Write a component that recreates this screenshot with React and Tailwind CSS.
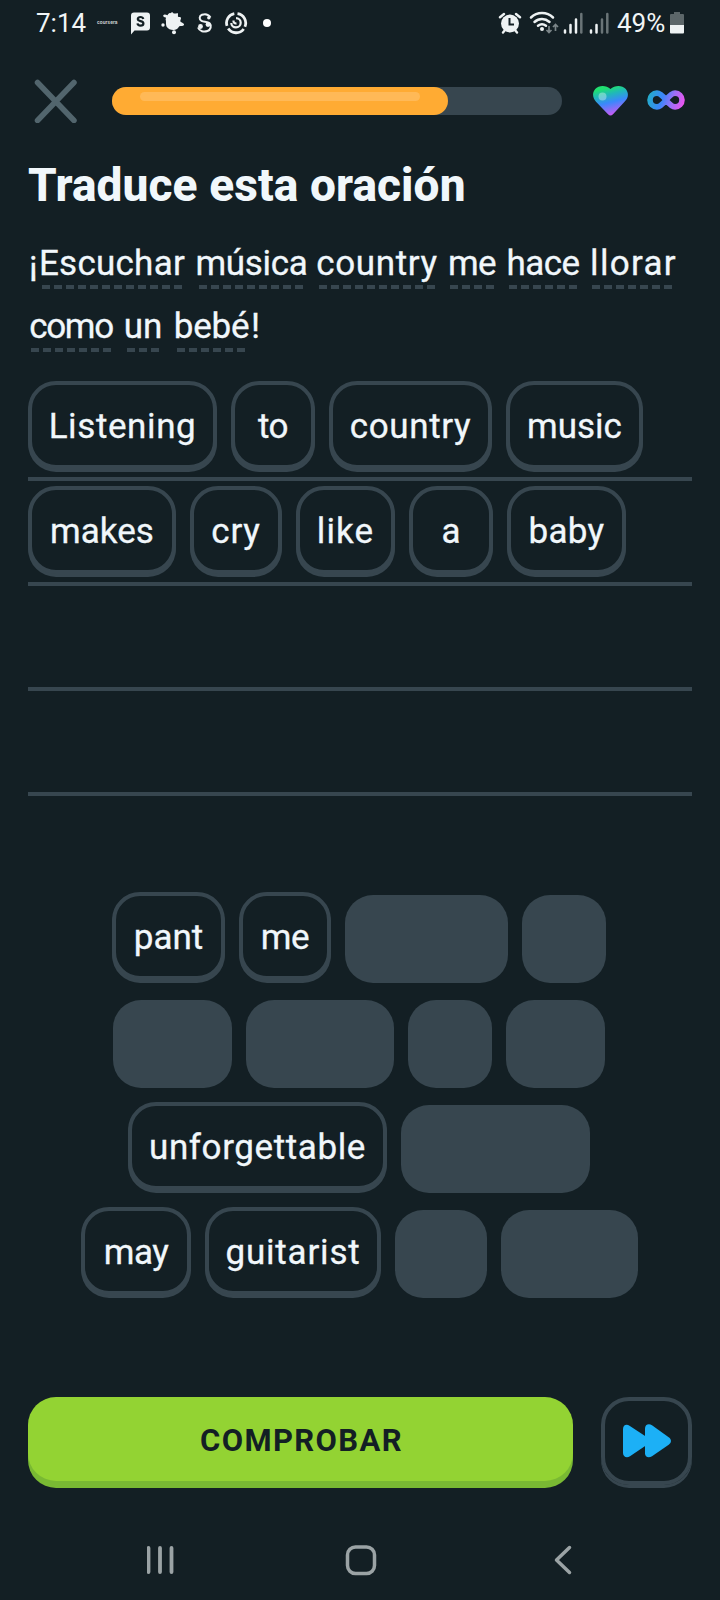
import React from "react";

function Tile({ word, className, text = "" }) {
  return (
    <div
      className={`flex h-[88px] shrink-0 items-center justify-center rounded-[28px] border-4 border-[#37464f] bg-[#131f24] pt-[3px] shadow-[0_3px_0_#37464f] ${className}`}
    >
      <span className={`whitespace-nowrap text-[35px] leading-none [-webkit-text-stroke:0.3px] ${text}`}>{word}</span>
    </div>
  );
}

function Blank({ className }) {
  return <div className={`mt-[3px] h-[88px] shrink-0 rounded-[28px] bg-[#37464f] ${className}`} />;
}

function Hint({ word, className, text = "" }) {
  return (
    <span
      className={`flex h-[52px] shrink-0 justify-center bg-[repeating-linear-gradient(90deg,#37464f_0_8px,transparent_8px_12px)] bg-[length:100%_4px] bg-bottom bg-no-repeat ${className}`}
    >
      <span className={`whitespace-nowrap ${text}`}>{word}</span>
    </span>
  );
}

function StatusBar() {
  return (
    <header className="flex h-[45px] items-center pl-[36px] pr-[36px] text-[#f1f5f6]">
      <span className="w-[61px] text-[26px] leading-none">7:14</span>
      <span className="flex w-[34px] text-[5px] font-bold leading-none tracking-[0.1px] text-[#c3c9cb]">coursera</span>
      <svg className="h-6 w-[19px]" viewBox="0 0 19 24">
        <path d="M3 1.500h13a3 3 0 0 1 3 3v12a3 3 0 0 1-3 3H3.500l-3.500 4V4.500a3 3 0 0 1 3-3z" fill="#eef2f3" />
        <path d="M12.300 8c-.4-1.400-1.400-2-2.800-2-1.600 0-2.700.8-2.700 2 0 2.800 5.600 1.400 5.600 4.400 0 1.400-1.200 2.200-2.900 2.200S6.700 13.800 6.500 12.400" fill="none" stroke="#131f24" strokeWidth="2.200" />
      </svg>
      <svg className="ml-[11px] h-6 w-6" viewBox="0 0 24 24" fill="#eef2f3">
        <path d="M2.200 4.200C3.500 3 5 3.800 6.500 4.200 7.500 3 7.800 1.800 9.500 2.200 10.500 1 11.800.600 12.300 2.200c1.500.8 2.700.2 4.200-.2 1 1 .2 2.500.5 3.800 1.500.4 2.500 0 3 1 .3 1.500-1.200 2.500-.5 4 1.500 1 4 1.700 3.500 3.200-1 1.500-3.200.7-4.700 1.200-1.200 1.600-2.300 3.600-5.300 3.800-2.700.2-6-.8-7.500-3.500C4.600 13 5.300 11 4.800 9 4 8 5.500 7.500 4.800 6.500 3.500 6.300 2 5.700 2.200 4.200z" />
        <circle cx="2" cy="14" r="1.700" />
        <circle cx="13" cy="21.300" r="2" />
      </svg>
      <svg className="ml-[11px] h-6 w-[17px]" viewBox="0 0 17 24" fill="none" stroke="#eef2f3" strokeWidth="2">
        <path d="M14.500 6.500C12.500 3.500 9 2.700 6 3.800 3 5 3 8.500 5.500 9.800c2.500 1.300 6 .5 8.300 2.700 2 2.200 1 6.300-2.300 7.500-3.500 1.200-8 .5-9.500-3.500" />
        <circle cx="12.800" cy="6.800" r="1.700" fill="#eef2f3" stroke="none" />
        <circle cx="4.500" cy="15.500" r="2.400" fill="#eef2f3" stroke="none" />
        <circle cx="12" cy="13.500" r="2.400" fill="#eef2f3" stroke="none" />
      </svg>
      <svg className="ml-[11px] h-6 w-6" viewBox="0 0 24 24" fill="none" stroke="#eef2f3" strokeWidth="2.800">
        <path d="M10.300 2.600a9.500 9.500 0 0 0-7.300 12.300M4.200 17.500a9.500 9.500 0 0 0 15.500.5M20.900 15.800a9.500 9.500 0 0 0-7.400-13.200" />
        <path d="M12 7.200c2.700 0 4.700 2 4.700 4.500s-2 4.600-4.700 4.600-4.700-1.800-4.700-4.300" strokeWidth="2.200" />
        <path d="M9.500 9.500c-.2 1.800.9 3.200 3 2.800" strokeWidth="2.200" />
      </svg>
      <span className="ml-[15px] h-2 w-2 rounded-full bg-white" />
      <svg className="ml-auto h-6 w-[24px]" viewBox="0 0 24 24">
        <g fill="none" stroke="#eef2f3" strokeLinecap="round" strokeWidth="2.400">
          <path d="M2 6.200L6 3M22 6.200L18 3M5 21.500l2.500-3M19 21.500l-2.500-3" />
        </g>
        <circle cx="12" cy="12.500" r="9" fill="#eef2f3" />
        <path d="M11.500 7v6.500h4.500" fill="none" stroke="#131f24" strokeWidth="2" />
      </svg>
      <svg className="ml-[7px] h-6 w-[30px]" viewBox="0 0 30 24" fill="none">
        <g stroke="#eef2f3" strokeLinecap="round" strokeWidth="2.500">
          <path d="M2 6.500C8 .5 18 .5 24 6.500M5.500 11c4.500-4 10.500-4 15 0M9 14.800c2.500-2 5.500-2 8 0" />
        </g>
        <circle cx="13" cy="18" r="2" fill="#eef2f3" />
        <path d="M20 15v6.500m-2.500-2.500 2.500 2.500 2.500-2.500M26.500 20v-6.500m-2.500 2.500 2.500-2.500 2.500 2.500" stroke="#7b8588" strokeWidth="1.700" />
      </svg>
      <svg className="ml-[4px] h-6 w-[20px]" viewBox="0 0 20 24" strokeLinecap="round" strokeWidth="2.500">
        <path d="M2 19.500v2M7.500 14v7.500M13 8.500v13" stroke="#eef2f3" />
        <path d="M18.300 3v18.500" stroke="#6a7477" />
      </svg>
      <svg className="ml-[6px] h-6 w-[20px]" viewBox="0 0 20 24" strokeLinecap="round" strokeWidth="2.500">
        <path d="M2 19.500v2M7.500 14v7.500" stroke="#eef2f3" />
        <path d="M13 8.500v13M18.300 3v18.500" stroke="#6a7477" />
      </svg>
      <span className="ml-[8px] w-[53px] whitespace-nowrap text-[26px] leading-none">49%</span>
      <svg className="h-6 w-[14px]" viewBox="0 0 14 24">
        <path d="M4 1h6v2h3a1 1 0 0 1 1 1v10H0V4a1 1 0 0 1 1-1h3z" fill="#5c6669" />
        <path d="M0 14h14v7.500a1 1 0 0 1-1 1H1a1 1 0 0 1-1-1z" fill="#eef2f3" />
      </svg>
    </header>
  );
}

function LessonHeader() {
  return (
    <div className="flex h-[112px] items-center pl-[34px]">
      <svg className="h-11 w-11" viewBox="0 0 44 44" stroke="#52656d" strokeWidth="5.500" strokeLinecap="round">
        <path d="M3.500 3.500l36.500 38M40 3.500l-36.500 38" />
      </svg>
      <div className="ml-[34px] h-7 w-[450px] rounded-full bg-[#37464f]">
        <div className="h-7 w-[336px] rounded-full bg-[#ffab33] px-7 pt-[5px]">
          <div className="h-[9px] rounded-full bg-[#ffb957]" />
        </div>
      </div>
      <svg className="ml-[30px] h-[32px] w-[37px]" viewBox="0 0 37 32">
        <defs>
          <linearGradient id="heart" x1="0.3" y1="0" x2="0.600" y2="1">
            <stop offset="0.080" stopColor="#20e070" />
            <stop offset="0.300" stopColor="#20b8b8" />
            <stop offset="0.560" stopColor="#3a88fb" />
            <stop offset="0.950" stopColor="#c45cf5" />
          </linearGradient>
        </defs>
        <path d="M18.500 4C22.500.2 30-.2 33.800 4c3.400 4.500 2.400 9-.8 12.300L21 29.300c-1.700 1.700-3.300 1.700-5 0L4 16.800C.5 13 0 8 3.200 4 7-.2 14.500.2 18.500 4z" fill="url(#heart)" />
        <circle cx="10.500" cy="11.500" r="4" fill="#fff" fillOpacity="0.350" />
      </svg>
      <svg className="ml-[18px] h-[22px] w-[38px]" viewBox="0 0 38 22">
        <defs>
          <linearGradient id="loop" gradientUnits="userSpaceOnUse" x1="0" y1="4" x2="38" y2="16">
            <stop offset="0" stopColor="#20b0c4" />
            <stop offset="0.400" stopColor="#3c85fb" />
            <stop offset="0.650" stopColor="#9a70f8" />
            <stop offset="1" stopColor="#f850ee" />
          </linearGradient>
        </defs>
        <path d="M19 10C15.500 5.500 13 3.100 9.900 3.100a6.900 6.900 0 0 0 0 13.800C13 16.900 15.500 14.500 19 10s6-6.900 9.100-6.900a6.900 6.900 0 0 1 0 13.800C25 16.900 22.500 14.500 19 10z" fill="none" stroke="url(#loop)" strokeWidth="5.600" />
      </svg>
    </div>
  );
}

function Row({ children }) {
  return <div className="flex h-[105px] gap-[14px] border-b-4 border-[#37464f] pt-[5px]">{children}</div>;
}

function BankRow({ children, className = "" }) {
  return <div className={`flex h-[105px] items-start gap-[14px] ${className}`}>{children}</div>;
}

export default function App() {
  return (
    <div className="flex h-[1600px] w-[720px] flex-col overflow-hidden bg-[#131f24] font-['Roboto',sans-serif] text-[#f1f7fb]">
      <StatusBar />
      <LessonHeader />
      <main className="flex flex-col px-7">
        <h1 className="h-[80px] whitespace-nowrap pt-[1px] text-[46px] font-extrabold leading-[54px] tracking-[0.1px]">
          Traduce esta oración
        </h1>
        <div className="flex h-[63px] text-[35px] leading-[54px] [-webkit-text-stroke:0.3px]">
          <span className="w-[14px] pl-px">¡</span>
          <Hint word="Escuchar" className="w-[140px]" text="tracking-[0.25px]" />
          <Hint word="música" className="ml-[17px] w-[105px]" text="tracking-[-0.3px]" />
          <Hint word="country" className="ml-[15px] w-[116px]" text="tracking-[0.6px]" />
          <Hint word="me" className="ml-[15px] w-[44px]" text="tracking-[-0.5px]" />
          <Hint word="hace" className="ml-[15px] w-[68px]" text="tracking-[-0.6px]" />
          <Hint word="llorar" className="ml-[15px] w-[82px]" text="pl-px tracking-[1.3px]" />
        </div>
        <div className="flex h-[76px] pl-[3px] text-[35px] leading-[54px] [-webkit-text-stroke:0.3px]">
          <Hint word="como" className="w-[80px]" text="tracking-[-1.3px]" />
          <Hint word="un" className="ml-[16px] w-[32px]" />
          <Hint word="bebé" className="ml-[18px] w-[69px]" text="tracking-[-0.2px]" />
          <span className="ml-[5px]">!</span>
        </div>
        <section className="flex flex-col">
          <Row>
            <Tile word="Listening" className="w-[189px]" text="tracking-[0.6px]" />
            <Tile word="to" className="w-[84px]" text="tracking-[-0.5px]" />
            <Tile word="country" className="w-[163px]" text="tracking-[0.6px]" />
            <Tile word="music" className="w-[137px]" text="tracking-[0px]" />
          </Row>
          <Row>
            <Tile word="makes" className="w-[148px]" text="tracking-[0px]" />
            <Tile word="cry" className="w-[92px]" text="tracking-[0.8px]" />
            <Tile word="like" className="w-[99px]" text="tracking-[1.1px]" />
            <Tile word="a" className="w-[84px]" />
            <Tile word="baby" className="w-[119px]" text="tracking-[0.3px]" />
          </Row>
          <Row />
          <Row />
        </section>
        <section className="flex flex-col pt-[96px]">
          <BankRow className="pl-[84px]">
            <Tile word="pant" className="w-[113px]" text="tracking-[0px]" />
            <Tile word="me" className="w-[92px]" text="tracking-[-0.5px]" />
            <Blank className="w-[163px]" />
            <Blank className="w-[84px]" />
          </BankRow>
          <BankRow className="pl-[85px]">
            <Blank className="w-[119px]" />
            <Blank className="w-[148px]" />
            <Blank className="w-[84px]" />
            <Blank className="w-[99px]" />
          </BankRow>
          <BankRow className="pl-[100px]">
            <Tile word="unforgettable" className="w-[259px]" text="tracking-[0.6px]" />
            <Blank className="w-[189px]" />
          </BankRow>
          <BankRow className="pl-[53px]">
            <Tile word="may" className="w-[110px]" text="tracking-[-0.5px]" />
            <Tile word="guitarist" className="w-[176px]" text="tracking-[0.8px]" />
            <Blank className="w-[92px]" />
            <Blank className="w-[137px]" />
          </BankRow>
        </section>
        <div className="flex gap-7 pt-[85px]">
          <button className="flex h-[84px] w-[545px] items-center justify-center rounded-[28px] bg-[#93d333] pl-[2px] pt-[2px] text-[31px] font-bold leading-none tracking-[1.4px] text-[#131f24] shadow-[0_7px_0_#79b933]">
            COMPROBAR
          </button>
          <button className="flex h-[88px] w-[91px] items-center justify-center rounded-[28px] border-4 border-[#37464f] shadow-[0_3px_0_#37464f]">
            <svg className="ml-[1px] h-[34px] w-[48px]" viewBox="0 0 48 34" fill="#1cb0f6">
              <path d="M0 5C0 1 3.500-.3 6.500 1.700L24 13.300v7.400L7 32.300C3.500 34.300 0 32.800 0 29z" />
              <path d="M22 4.500C22 .8 25.500-.8 29 1.300l16.700 12c3 2.200 3 5.200 0 7.400L29 32.200c-3.500 2.300-7 .8-7-2.900z" />
            </svg>
          </button>
        </div>
      </main>
      <nav className="mt-[60px] flex h-[30px] items-center pl-[147px]">
        <svg className="h-[30px] w-[27px]" viewBox="0 0 27 30" stroke="#9ba3a5" strokeWidth="3.800" strokeLinecap="round">
          <path d="M1.500 3v24M13 3v24M24.500 3v24" />
        </svg>
        <svg className="ml-[171px] h-[31px] w-[32px]" viewBox="0 0 32 31" fill="none" stroke="#9ba3a5" strokeWidth="3.500">
          <rect x="2.500" y="2" width="27" height="26.500" rx="8" />
        </svg>
        <svg className="ml-[177px] h-[30px] w-[18px]" viewBox="0 0 18 30" fill="none" stroke="#9ba3a5" strokeWidth="3.500" strokeLinecap="round" strokeLinejoin="round">
          <path d="M15.500 2.500L2.500 15l13 12.500" />
        </svg>
      </nav>
    </div>
  );
}
